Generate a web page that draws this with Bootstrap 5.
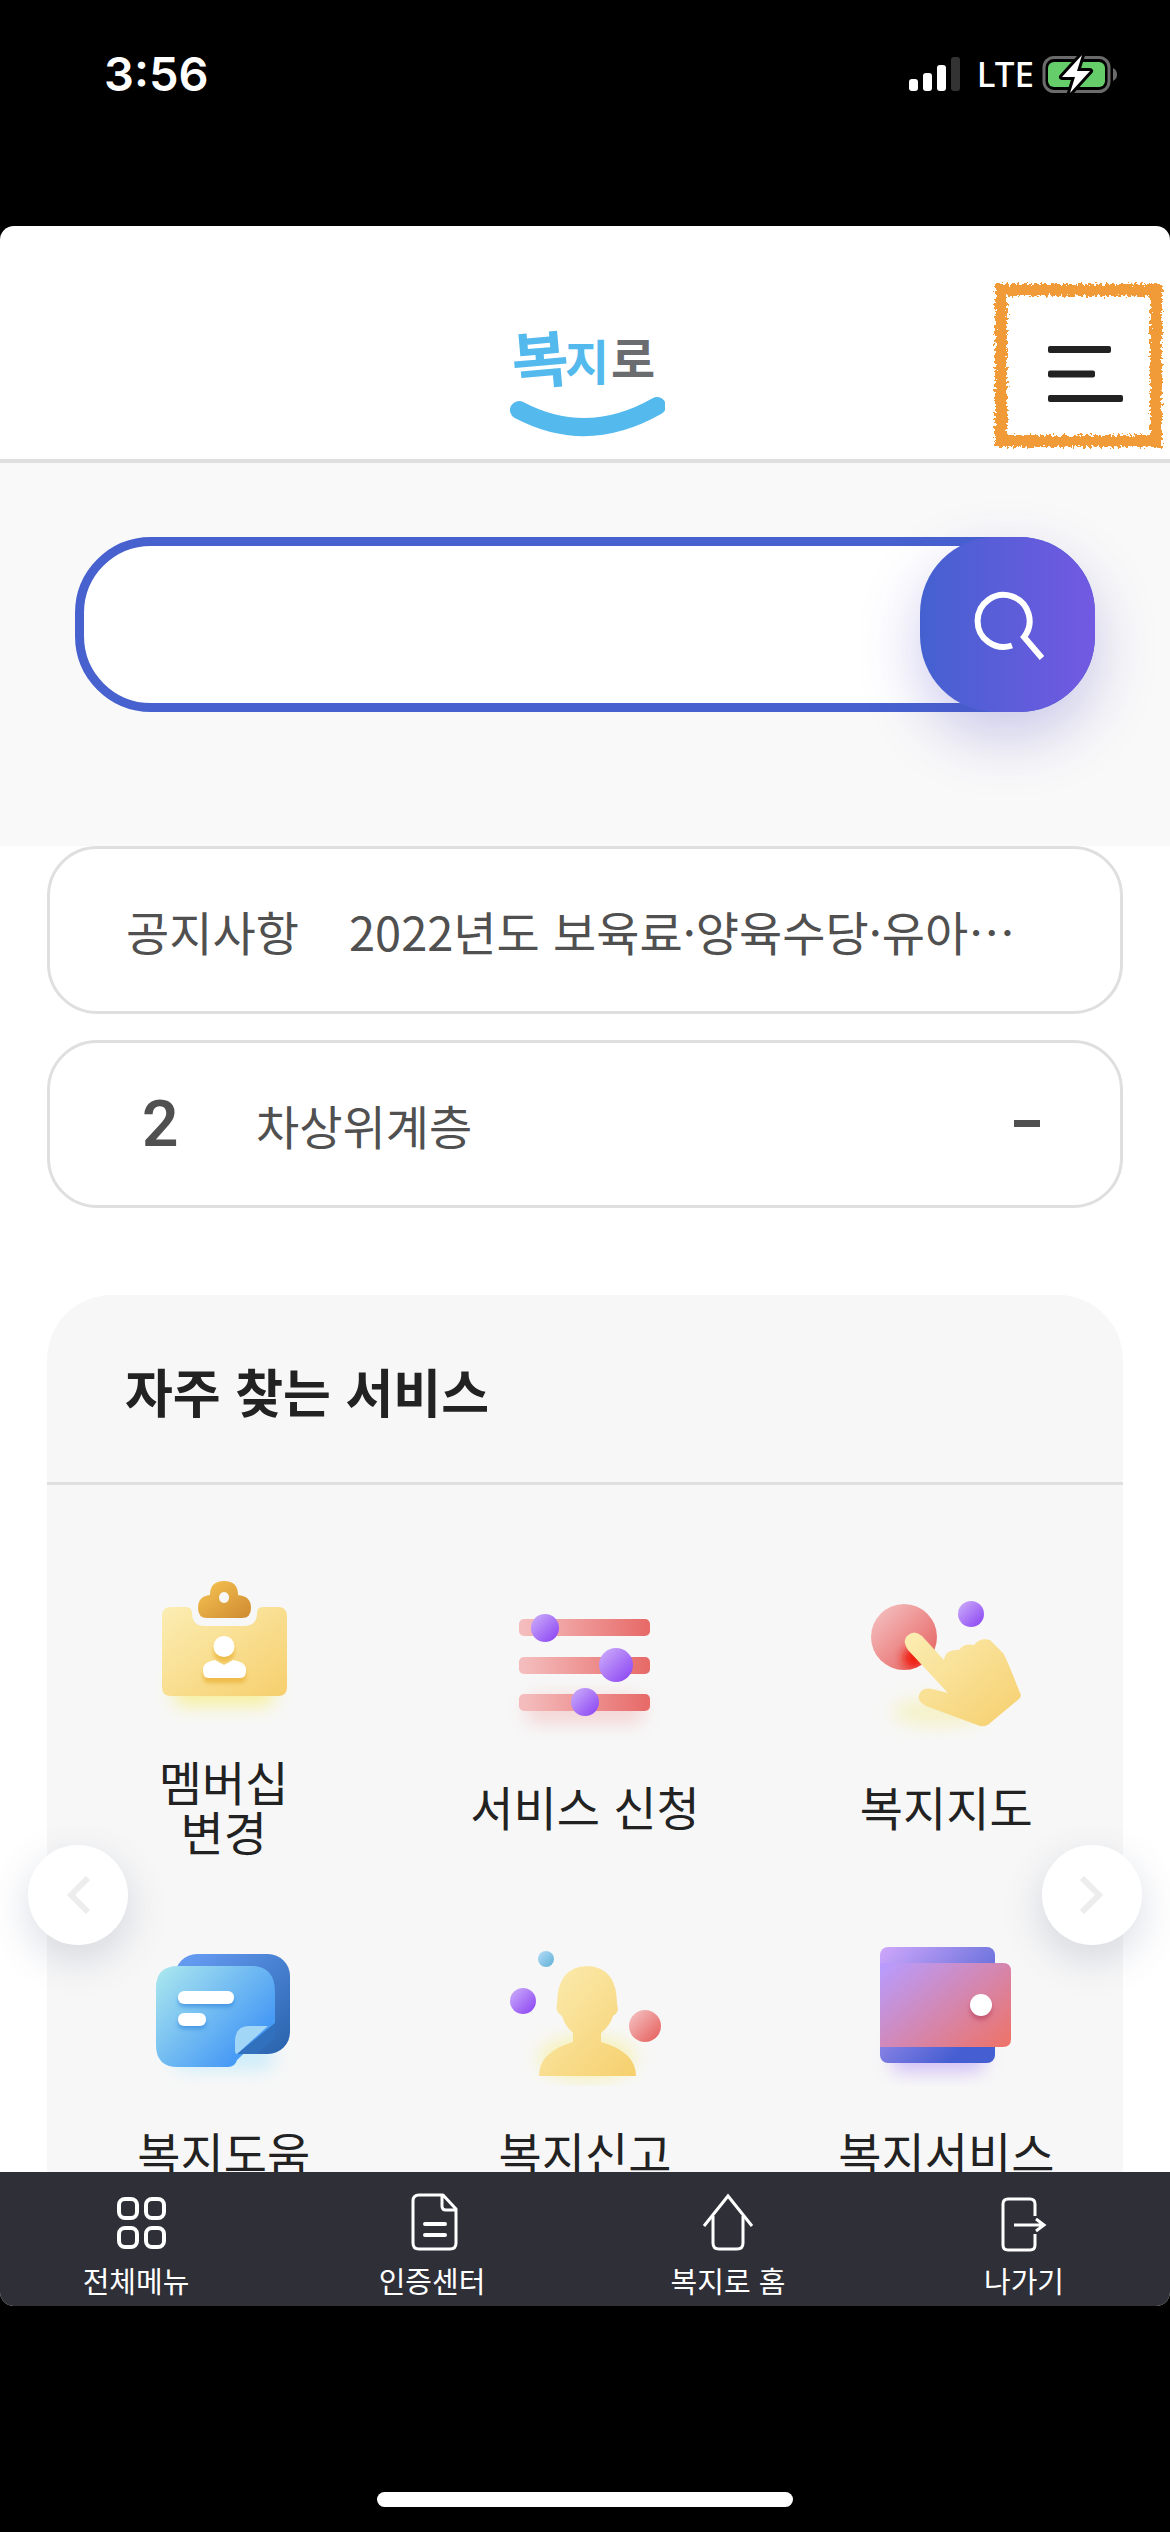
<!DOCTYPE html>
<html lang="ko">
<head>
<meta charset="utf-8">
<meta name="viewport" content="width=device-width, initial-scale=1">
<title>복지로</title>
<link href="https://cdn.jsdelivr.net/npm/bootstrap@5.3.0/dist/css/bootstrap.min.css" rel="stylesheet">
<style>
  body { height: 100vh; background: #000; color: #222; font-family: "Noto Sans CJK KR", "Noto Sans", sans-serif; font-size: 47px; line-height: 50px; }
  svg { display: block; }
  a { color: inherit; text-decoration: none; }
  .status-bar { height: 226px; padding: 50px 52px 0 104px; color: #fff; line-height: 48px; }
  .status-time { font-family: Inter, sans-serif; font-weight: 600; font-size: 47px; }
  .status-net { font-family: "Noto Sans", sans-serif; font-weight: 500; font-size: 35px; }
  .app-shell { min-height: 0; border-radius: 14px; }
  .app-head { height: 237px; border-bottom: 4px solid #dfdfdf; padding-top: 75px; }
  .menu-btn { right: 46px; top: 120px; }
  .menu-frame { right: 4px; top: 52px; pointer-events: none; }
  .scroll-area { min-height: 0; }
  .search-zone { background: #f9f9f9; padding: 74px 75px 134px; }
  .search-input { height: 175px; border: 9px solid #4761cf; border-radius: 76px; padding: 0 190px 0 60px; font-size: 47px; }
  .search-btn { width: 175px; height: 175px; border-radius: 76px; background: linear-gradient(90deg, #4461d0, #7359e2); box-shadow: 0 24px 60px rgba(80, 70, 190, .28); }
  .page-pad { padding: 0 47px; }
  .info-card { height: 168px; border: 3px solid #dfdfdf; border-radius: 50px; padding: 2px 76px 0 76px; color: #505050; margin-bottom: 26px; background: #fff; }
  .info-label { margin-right: 50px; }
  .rank-no { font-family: Roboto, sans-serif; font-weight: 600; font-size: 64px; width: 130px; padding-left: 16px; }
  .rank-same { width: 26px; height: 7px; background: #505050; margin: 0 4px 4px 0; }
  .svc-panel { background: #f7f7f7; border-radius: 65px 65px 0 0; margin-top: 87px; }
  .svc-title { font-size: 52px; line-height: 60px; font-weight: 700; padding: 66px 78px 61px; border-bottom: 3px solid #dfdfdf; }
  .svc-grid { display: grid; grid-template-columns: repeat(3, 1fr); row-gap: 50px; margin: 0 -4px; padding: 75px 0 60px; }
  .svc-grid svg { width: 180px; height: 180px; margin-bottom: 16px; }
  .svc-name { height: 100px; }
  .slide-btn { width: 100px; height: 100px; top: 550px; background: #fff; box-shadow: 0 14px 40px rgba(70, 85, 120, .2); }
  .slide-prev { left: -19px; }
  .slide-next { right: -19px; }
  .tab-bar { height: 134px; background: #2f2f38; color: #fff; font-size: 29px; line-height: 40px; }
  .tab-list { margin: 0 -2px 0 -12px; padding-top: 16px; }
  .tab-list svg { width: 70px; height: 68px; margin-bottom: 4px; }
  .home-zone { height: 226px; padding-bottom: 25px; }
  .home-bar { width: 416px; height: 15px; background: #fff; }
</style>
<script src="https://cdn.jsdelivr.net/npm/bootstrap@5.3.0/dist/js/bootstrap.bundle.min.js"></script>
</head>
<body class="d-flex flex-column overflow-hidden">

<div class="status-bar d-flex justify-content-between align-items-start flex-shrink-0">
  <span class="status-time">3:56</span>
  <div class="d-flex align-items-center">
    <svg width="52" height="48" viewBox="0 0 52 48" fill="#fff" aria-hidden="true">
      <rect x="0" y="29" width="9" height="12" rx="3"/><rect x="14" y="23" width="9" height="18" rx="3"/>
      <rect x="28" y="15" width="9" height="26" rx="3"/><rect x="42" y="7" width="9" height="34" rx="3" fill="#333"/>
    </svg>
    <span class="status-net ps-3 pe-2">LTE</span>
    <svg width="76" height="48" viewBox="0 0 76 48" aria-hidden="true">
      <rect x="2" y="7.500" width="65" height="34" rx="10" fill="none" stroke="#6b6b6b" stroke-width="3"/>
      <path d="M71 18q4 2 4 6.500t-4 6.500z" fill="#6b6b6b"/>
      <rect x="6" y="12" width="57" height="25" rx="6" fill="#65cd69"/>
      <path d="M40 5L20 27h13l-5 16 20-22H35z" fill="#fff" stroke="#000" stroke-width="6" stroke-linejoin="round" paint-order="stroke"/>
    </svg>
  </div>
</div>

<div class="app-shell bg-white flex-fill d-flex flex-column overflow-hidden">
  <header class="app-head position-relative d-flex justify-content-center align-items-center flex-shrink-0">
    <a href="#" aria-label="복지로">
      <svg width="160" height="130" viewBox="0 0 160 130">
        <g font-family="Noto Sans CJK KR, sans-serif" font-weight="700">
          <text x="7" y="68" font-size="62" fill="#54b9ed" transform="rotate(-5 35 50)">복</text>
          <text x="60" y="65" font-size="48" fill="#54b9ed">지</text>
          <text x="106" y="62" font-size="48" fill="#6b6c70">로</text>
        </g>
        <path d="M14 95Q82 131 152 91" fill="none" stroke="#54b9ed" stroke-width="18" stroke-linecap="round"/>
      </svg>
    </a>
    <button type="button" class="menu-btn btn p-0 border-0 position-absolute" aria-label="메뉴">
      <svg width="76" height="56" viewBox="0 0 76 56" fill="#222">
        <rect width="63" height="7" rx="2"/><rect y="24.500" width="47" height="7" rx="2"/><rect y="49" width="75" height="7" rx="2"/>
      </svg>
    </button>
    <svg class="menu-frame position-absolute" width="180" height="174" viewBox="0 0 180 174" aria-hidden="true">
      <filter id="crayon" x="-5%" y="-5%" width="110%" height="110%">
        <feTurbulence type="fractalNoise" baseFrequency=".35" numOctaves="2" seed="4"/>
        <feDisplacementMap in="SourceGraphic" scale="9"/>
      </filter>
      <rect x="15" y="12" width="155" height="151" fill="none" stroke="#f19a37" stroke-width="12" filter="url(#crayon)"/>
    </svg>
  </header>

  <main class="scroll-area flex-fill overflow-hidden">
    <section class="search-zone">
      <form class="position-relative" role="search">
        <label class="visually-hidden" for="q">검색어</label>
        <input id="q" type="search" class="search-input form-control">
        <button type="button" class="search-btn btn border-0 p-0 position-absolute top-0 end-0 d-flex justify-content-center align-items-center" aria-label="검색">
          <svg width="72" height="76" viewBox="0 0 72 76" fill="none" stroke="#fff" stroke-width="6">
            <path d="M40 58.500A26 26 0 1 1 52 50L70 71M52 50l-1-1"/>
          </svg>
        </button>
      </form>
    </section>

    <div class="page-pad">
      <a href="#" class="info-card d-flex align-items-center">
        <span class="info-label text-nowrap">공지사항</span>
        <span class="text-nowrap">2022년도 보육료·양육수당·유아⋯</span>
      </a>
      <a href="#" class="info-card d-flex align-items-center">
        <span class="rank-no">2</span>
        <span>차상위계층</span>
        <span class="rank-same ms-auto"></span>
      </a>

      <section class="svc-panel position-relative">
        <h2 class="svc-title m-0">자주 찾는 서비스</h2>
        <div class="svc-grid text-center">
          <a href="#" class="d-flex flex-column align-items-center">
            <svg viewBox="0 0 180 180">
              <defs>
                <linearGradient id="gy" x1="0" y1="0" x2="1" y2="1"><stop stop-color="#fbedb3"/><stop offset="1" stop-color="#f6cf6d"/></linearGradient>
                <linearGradient id="gold" x1="0" y1="0" x2="1" y2="1"><stop stop-color="#f7c553"/><stop offset="1" stop-color="#ce8a30"/></linearGradient>
                <linearGradient id="gr" gradientUnits="userSpaceOnUse" x1="30" x2="152" y1="0" y2="0"><stop stop-color="#f4bcbc"/><stop offset="1" stop-color="#e76b69"/></linearGradient>
                <linearGradient id="gr2" x1="0" y1="0" x2="1" y2="1"><stop offset=".1" stop-color="#f4bcbc"/><stop offset="1" stop-color="#e45a58"/></linearGradient>
                <linearGradient id="gp" x1="0" y1="0" x2="1" y2="1"><stop offset=".1" stop-color="#c8a6f9"/><stop offset=".9" stop-color="#8f4bf4"/></linearGradient>
                <filter id="soft" x="-40%" y="-100%" width="180%" height="300%"><feGaussianBlur stdDeviation="9"/></filter>
                <filter id="spot" x="-40%" y="-40%" width="180%" height="180%"><feGaussianBlur stdDeviation="5"/></filter>
                <filter id="tiny" x="-40%" y="-60%" width="180%" height="220%"><feGaussianBlur stdDeviation="2"/></filter>
              </defs>
              <rect x="40" y="110" width="100" height="36" rx="10" fill="#f6ef8a" opacity=".8" filter="url(#soft)"/>
              <path d="M37 47h15q6 0 6 6 0 13 13 13h39q13 0 13-13 0-6 6-6h15q9 0 9 9v71q0 9-9 9H37q-9 0-9-9V56q0-9 9-9z" fill="url(#gy)"/>
              <path fill-rule="evenodd" d="M76 35Q76 21 90 21T104 35Q117 36 117 48 117 58 108 58H73Q64 58 64 48 64 36 76 35zM90 32a5 5.500 0 1 0 .1 0z" fill="url(#gold)"/>
              <g fill="#eebb48" filter="url(#tiny)" transform="translate(0 5)"><circle cx="90" cy="87" r="10.500"/><path d="M69 108q1-6 12-8l9 5 9-5q12 2 13 8 1 10-6 10H75q-7 0-6-10z"/></g>
              <g fill="#fff"><circle cx="90" cy="86.500" r="10.500"/><path d="M69 108q1-6 12-8l9 5 9-5q12 2 13 8 1 10-6 10H75q-7 0-6-10z"/></g>
            </svg>
            <span class="svc-name d-flex align-items-center">멤버십<br>변경</span>
          </a>
          <a href="#" class="d-flex flex-column align-items-center">
            <svg viewBox="0 0 180 180">
              <rect x="30" y="136" width="120" height="28" rx="14" fill="#f0a5a5" opacity=".4" filter="url(#soft)"/>
              <g fill="url(#gr)"><rect x="24" y="59" width="131" height="17" rx="5"/><rect x="24" y="97" width="131" height="17" rx="5"/><rect x="24" y="134" width="131" height="17" rx="5"/></g>
              <g fill="url(#gp)"><circle cx="50" cy="68" r="14"/><circle cx="121" cy="105" r="17"/><circle cx="90" cy="142" r="14"/></g>
            </svg>
            <span class="svc-name d-flex align-items-center">서비스 신청</span>
          </a>
          <a href="#" class="d-flex flex-column align-items-center">
            <svg viewBox="0 0 180 180">
              <clipPath id="ball"><circle cx="48" cy="77" r="33"/></clipPath>
              <ellipse cx="82" cy="152" rx="46" ry="14" fill="#f3ec9a" opacity=".5" filter="url(#soft)"/>
              <circle cx="48" cy="77" r="33" fill="url(#gr2)"/>
              <g clip-path="url(#ball)"><circle cx="58" cy="98" r="11" fill="#f01e10" filter="url(#spot)"/></g>
              <circle cx="115" cy="54" r="13" fill="url(#gp)"/>
              <path d="M52 90Q46 81 51 76 58 69 66 76L88 100Q89 89 103 90 108 83 118 85 124 77 134 80L147 93Q150 97 164 133 166 136 163 139L133 164Q129 167 124 166L70 146Q61 141 63 135 66 127 76 129L92 133z" fill="url(#gy)"/>
            </svg>
            <span class="svc-name d-flex align-items-center">복지지도</span>
          </a>
          <a href="#" class="d-flex flex-column align-items-center">
            <svg viewBox="0 0 180 180">
              <defs>
                <linearGradient id="b1" x1="0" y1="0" x2="1" y2="1"><stop offset=".1" stop-color="#6399ef"/><stop offset="1" stop-color="#2762ab"/></linearGradient>
                <linearGradient id="b2" x1="0" y1="0" x2="1" y2=".8"><stop stop-color="#ade9ee"/><stop offset=".85" stop-color="#489bf5"/></linearGradient>
              </defs>
              <rect x="40" y="136" width="100" height="28" rx="10" fill="#a5e4fb" opacity=".5" filter="url(#soft)"/>
              <rect x="41" y="48" width="115" height="100" rx="22" fill="url(#b1)"/>
              <path d="M44 60h73q24 0 24 26v32l-38 36q-2 7-9 7H44q-22 0-22-22V82q0-22 22-22z" fill="url(#b2)"/>
              <path d="M141 117V132L122 148H103z" fill="#3170bd"/>
              <path d="M134 120L103 148Q101 148 101 144V134Q102 120 115 120z" fill="#a2d6f7"/>
              <g fill="#2b7ed8" opacity=".6" filter="url(#tiny)"><rect x="44" y="89" width="56" height="12" rx="6"/><rect x="44" y="111" width="28" height="12" rx="6"/></g>
              <g fill="#fff"><rect x="44" y="85" width="56" height="13" rx="6"/><rect x="44" y="107" width="28" height="13" rx="6"/></g>
            </svg>
            <span class="svc-name d-flex align-items-center">복지도움</span>
          </a>
          <a href="#" class="d-flex flex-column align-items-center">
            <svg viewBox="0 0 180 180">
              <linearGradient id="b3" x1="0" y1="0" x2="1" y2="1"><stop stop-color="#b5dcf8"/><stop offset="1" stop-color="#5fb0d6"/></linearGradient>
              <ellipse cx="92" cy="152" rx="48" ry="22" fill="#f6ee8e" opacity=".6" filter="url(#soft)"/>
              <circle cx="51" cy="53" r="8" fill="url(#b3)"/><circle cx="28" cy="95" r="13" fill="url(#gp)"/><circle cx="150" cy="120" r="16" fill="url(#gr2)"/>
              <path d="M92 60Q122 61 122 98 125 106 118 110 115 120 106 127V136Q141 146 141 170H44Q44 146 78 136V127Q70 120 67 110 60 106 62 98 62 61 92 60z" fill="url(#gy)"/>
            </svg>
            <span class="svc-name d-flex align-items-center">복지신고</span>
          </a>
          <a href="#" class="d-flex flex-column align-items-center">
            <svg viewBox="0 0 180 180">
              <defs>
                <linearGradient id="w1" x1="0" y1="0" x2="1" y2="1"><stop stop-color="#cfa8fb"/><stop offset=".8" stop-color="#455ed1"/></linearGradient>
                <linearGradient id="w2" x1="0" y1=".1" x2="1" y2=".9"><stop stop-color="#b99bfb"/><stop offset="1" stop-color="#ec746c"/></linearGradient>
              </defs>
              <rect x="36" y="134" width="92" height="32" rx="8" fill="#b89cf5" opacity=".6" filter="url(#soft)"/>
              <rect x="24" y="41" width="115" height="116" rx="8" fill="url(#w1)"/>
              <path d="M24 57H147q8 0 8 8v68q0 8-8 8H24z" fill="url(#w2)"/>
              <circle cx="125" cy="103" r="11" fill="#b43c5a" opacity=".6" filter="url(#tiny)"/><circle cx="125" cy="99" r="11" fill="#fff"/>
            </svg>
            <span class="svc-name d-flex align-items-center">복지서비스</span>
          </a>
        </div>
        <button type="button" class="slide-btn slide-prev btn rounded-circle border-0 p-0 position-absolute d-flex justify-content-center align-items-center" aria-label="이전">
          <svg width="24" height="38" viewBox="0 0 24 38" fill="none" stroke="#ededed" stroke-width="6"><path d="M22 2L5 19l17 17"/></svg>
        </button>
        <button type="button" class="slide-btn slide-next btn rounded-circle border-0 p-0 position-absolute d-flex justify-content-center align-items-center" aria-label="다음">
          <svg width="24" height="38" viewBox="0 0 24 38" fill="none" stroke="#ededed" stroke-width="6"><path d="M2 2l17 17L2 36"/></svg>
        </button>
      </section>
    </div>
  </main>

  <nav class="tab-bar flex-shrink-0">
    <ul class="tab-list list-unstyled d-flex text-center">
      <li class="flex-fill w-25"><a href="#" class="d-flex flex-column align-items-center">
        <svg viewBox="0 0 70 68" fill="none" stroke="#fff" stroke-width="4"><rect x="18" y="11" width="18" height="19" rx="6"/><rect x="45" y="11" width="18" height="19" rx="6"/><rect x="18" y="40" width="18" height="19" rx="6"/><rect x="45" y="40" width="18" height="19" rx="6"/></svg>
        <span>전체메뉴</span></a></li>
      <li class="flex-fill w-25"><a href="#" class="d-flex flex-column align-items-center">
        <svg viewBox="0 0 70 68" fill="none" stroke="#fff" stroke-width="3" stroke-linecap="round" stroke-linejoin="round"><path d="M46 7H22q-6 0-6 6v42q0 6 6 6h31q6 0 6-6V21zM45 7v11q0 4 4 4h10"/><path d="M28 36h20M28 47h20" stroke-width="4"/></svg>
        <span>인증센터</span></a></li>
      <li class="flex-fill w-25"><a href="#" class="d-flex flex-column align-items-center">
        <svg viewBox="0 0 70 68" fill="none" stroke="#fff" stroke-width="3"><path d="M11 38L35 8l24 30"/><path d="M20 28v27q0 6 6 6h18q6 0 6-6V28"/></svg>
        <span>복지로 홈</span></a></li>
      <li class="flex-fill w-25"><a href="#" class="d-flex flex-column align-items-center">
        <svg viewBox="0 0 70 68" fill="none" stroke="#fff" stroke-width="3"><path d="M46 28V16q0-5-5-5H19q-5 0-5 5v41q0 5 5 5h22q5 0 5-5V46"/><path d="M25 37h30M47 31l8 6-8 6"/></svg>
        <span>나가기</span></a></li>
    </ul>
  </nav>
</div>

<div class="home-zone d-flex justify-content-center align-items-end flex-shrink-0">
  <div class="home-bar rounded-pill"></div>
</div>
</body>
</html>
